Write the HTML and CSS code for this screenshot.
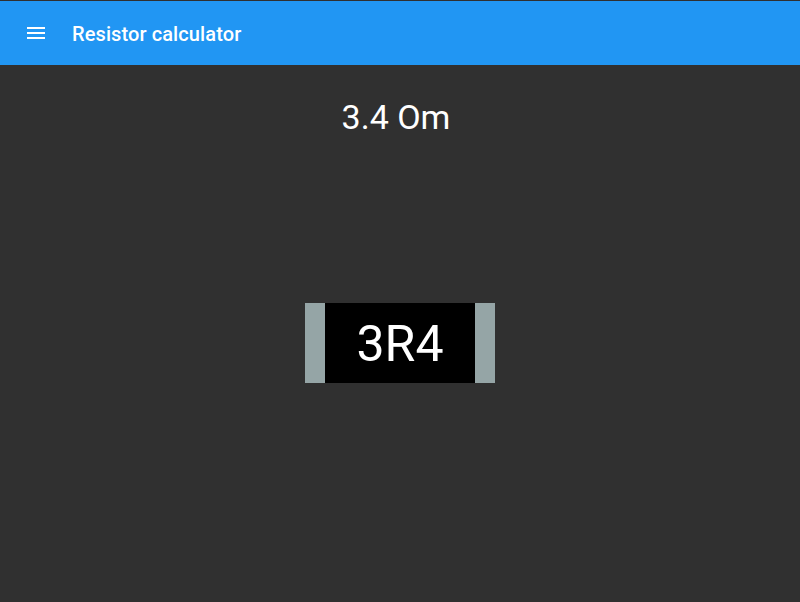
FILE: index.html
```html
<!DOCTYPE html>
<html lang="en">
<head>
<meta charset="utf-8">
<title>Resistor calculator</title>
<link rel="stylesheet" href="styles.css">
</head>
<body>
<header class="appbar">
  <button class="menu-btn" aria-label="Menu">
    <svg width="24" height="24" viewBox="0 0 24 24"><path fill="#fff" d="M3 18h18v-2H3v2zm0-5h18v-2H3v2zm0-7v2h18V6H3z"/></svg>
  </button>
  <h1 class="title">Resistor calculator</h1>
</header>
<main class="content">
  <div class="value">3.4 Om</div>
  <div class="chip">
    <div class="cap"></div>
    <div class="body">3R4</div>
    <div class="cap"></div>
  </div>
</main>
</body>
</html>
```
FILE: styles.css
```css
html, body {
  margin: 0;
  padding: 0;
  height: 100%;
}
body {
  background: #303030;
  font-family: Roboto, "Liberation Sans", sans-serif;
  color: #fff;
  padding-top: 1px;
  box-sizing: border-box;
}
.appbar {
  height: 64px;
  background: #2196f3;
  display: flex;
  align-items: center;
  padding: 0 24px;
}
.menu-btn {
  width: 24px;
  height: 24px;
  padding: 0;
  border: 0;
  background: none;
  display: flex;
}
.title {
  margin: 2px 0 0 24px;
  font-size: 20px;
  font-weight: 500;
  letter-spacing: 0.1px;
}
.content {
  display: flex;
  flex-direction: column;
  align-items: center;
}
.value {
  margin-top: 32px;
  font-size: 34px;
  line-height: 40px;
  margin-left: -8px;
}
.chip {
  margin-top: 166px;
  display: flex;
  height: 80px;
}
.cap {
  width: 20px;
  background: #95a5a6;
}
.body {
  width: 150px;
  background: #000;
  display: flex;
  align-items: center;
  justify-content: center;
  font-size: 50px;
  padding-top: 2px;
  box-sizing: border-box;
}
```
